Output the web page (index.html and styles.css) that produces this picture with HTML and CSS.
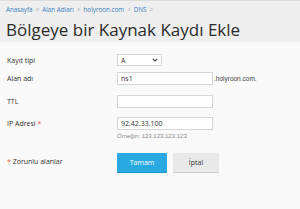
FILE: index.html
```html
<!DOCTYPE html>
<html lang="tr">
<head>
<meta charset="utf-8">
<link rel="stylesheet" href="styles.css">
</head>
<body>
<div class="header">
  <div class="crumbs">
    <a>Anasayfa</a><span class="sep">&gt;</span><a>Alan Adları</a><span class="sep">&gt;</span><a>holyroon.com</a><span class="sep">&gt;</span><a>DNS</a><span class="sep">&gt;</span>
  </div>
  <h1 class="title">Bölgeye bir Kaynak Kaydı Ekle</h1>
</div>
<form class="form">
  <div class="row r1">
    <label class="lbl">Kayıt tipi</label>
    <div class="select"><span>A</span><svg class="chev" width="6" height="4" viewBox="0 0 6 4"><path d="M0.7 0.8 L3 3 L5.3 0.8" fill="none" stroke="#444" stroke-width="1.1"/></svg></div>
  </div>
  <div class="row r2">
    <label class="lbl">Alan adı</label>
    <div class="field"><div class="input">ns1</div><span class="suffix">.holyroon.com.</span></div>
  </div>
  <div class="row r3">
    <label class="lbl">TTL</label>
    <div class="input"></div>
  </div>
  <div class="row r4">
    <label class="lbl">IP Adresi <span class="req">*</span></label>
    <div class="col">
      <div class="input">92.42.33.100</div>
      <div class="hint">Örneğin: 123.123.123.123</div>
    </div>
  </div>
  <div class="row r5">
    <div class="lbl"><span class="req">*</span> Zorunlu alanlar</div>
    <div class="buttons">
      <button type="button" class="btn primary">Tamam</button>
      <button type="button" class="btn">İptal</button>
    </div>
  </div>
</form>
</body>
</html>
```
FILE: styles.css
```css
html, body {
  margin: 0;
  padding: 0;
}
body {
  background: #f9f9f9;
  font-family: "Open Sans", "DejaVu Sans", sans-serif;
  color: #333;
  width: 300px;
  height: 209px;
  overflow: hidden;
}
.header {
  background: #eeeeee;
  border-top: 1px solid #dcdcdc;
  height: 42px;
  box-sizing: border-box;
  padding: 4px 6px 0;
}
.crumbs {
  font-size: 6.3px;
  line-height: 10px;
  color: #3a7fc1;
  white-space: nowrap;
}
.crumbs .sep {
  color: #aaa;
  margin: 0 3px;
}
.title {
  margin: 3px 0 0;
  font-size: 17px;
  line-height: 23px;
  font-weight: 400;
  color: #2b2b2b;
  white-space: nowrap;
}
.form {
  padding: 0 0 0 7px;
}
.row {
  display: flex;
  align-items: flex-start;
}
.lbl {
  width: 110px;
  font-size: 7px;
  line-height: 12px;
  color: #333;
}
.req {
  color: #d9534f;
}
.r1 { margin-top: 12px; }
.r2 { margin-top: 5px; }
.r3 { margin-top: 10px; }
.r4 { margin-top: 9px; }
.r5 { margin-top: 14px; }
.r1 .lbl, .r2 .lbl, .r3 .lbl, .r4 .lbl { line-height: 13px; }
.r5 .lbl { padding-top: 3px; }
.select {
  width: 45px;
  height: 12px;
  box-sizing: border-box;
  border: 1px solid #d5d5d5;
  background: #fff;
  display: flex;
  align-items: center;
  justify-content: space-between;
  padding: 0 3px;
  font-size: 7px;
}
.field {
  display: flex;
  align-items: center;
}
.input {
  width: 96px;
  height: 13px;
  box-sizing: border-box;
  border: 1px solid #d5d5d5;
  background: #fff;
  font-size: 7px;
  line-height: 11px;
  padding: 0 3px;
  color: #333;
}
.suffix {
  font-family: "Liberation Sans", Arial, sans-serif;
  font-size: 6.5px;
  color: #444;
  margin-left: 1px;
}
.hint {
  font-family: "Liberation Sans", Arial, sans-serif;
  font-size: 6px;
  color: #888;
  margin-top: 3px;
}
.buttons {
  display: flex;
  gap: 6px;
}
.btn {
  width: 46px;
  height: 20px;
  border: none;
  border-bottom: 1px solid #ccc;
  background: #e8e8e8;
  font-family: "Open Sans", "DejaVu Sans", sans-serif;
  font-size: 7px;
  color: #333;
  padding: 0;
  margin: 0;
  border-radius: 1px;
}
.btn.primary {
  width: 50px;
  background: #28a9e0;
  border-bottom-color: #1f8fc0;
  color: #fff;
}
```
